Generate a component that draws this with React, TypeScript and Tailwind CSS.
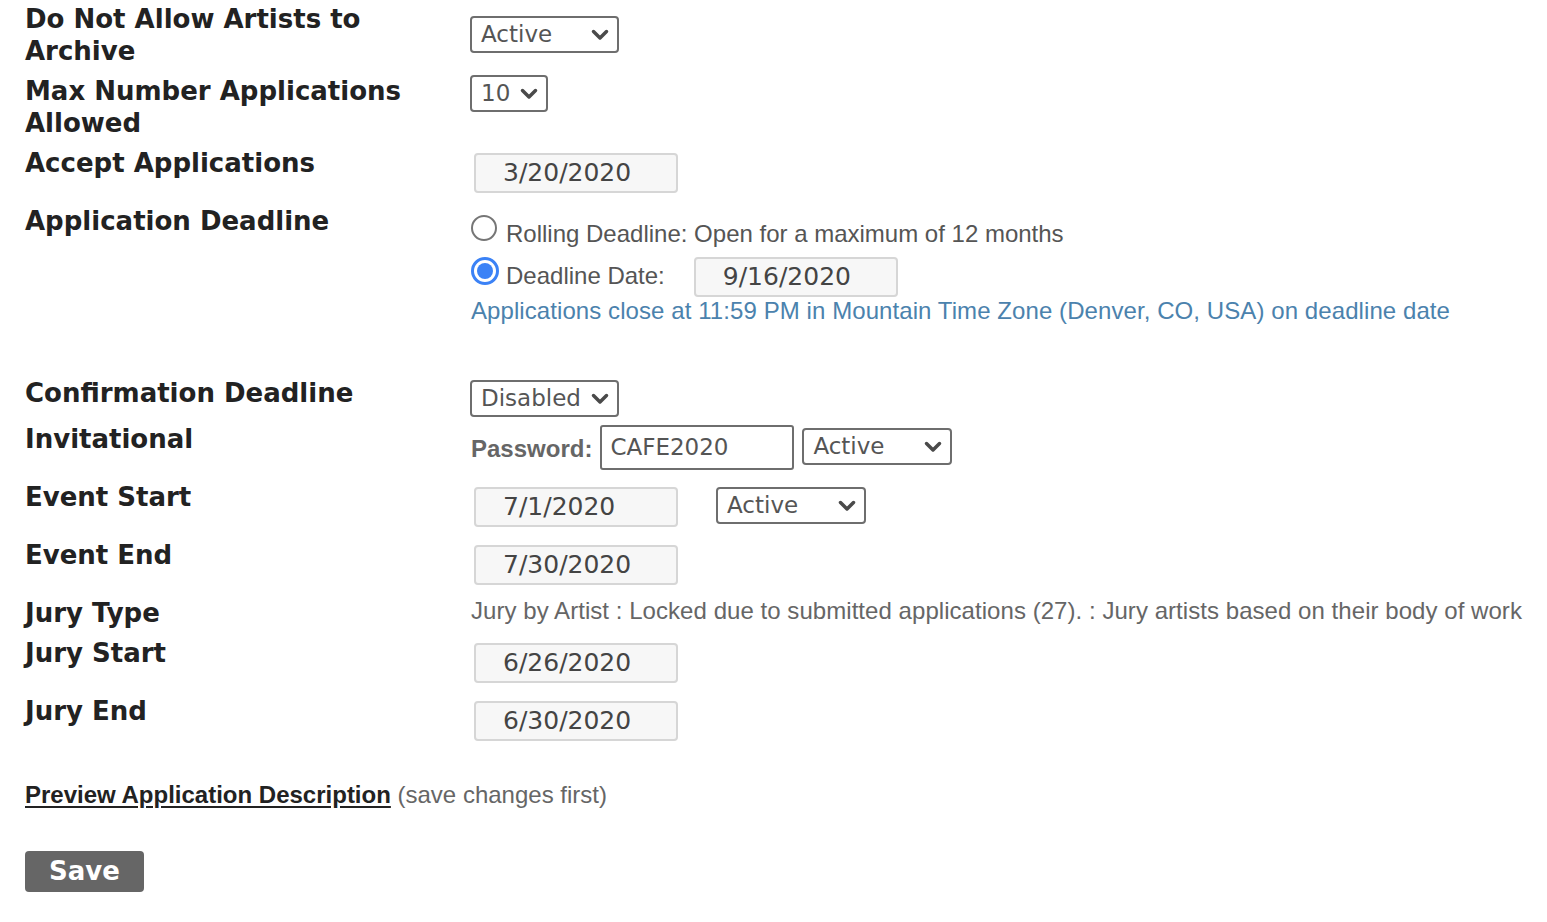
import React from "react";

const Chevron: React.FC = () => (
  <svg width="18" height="12" viewBox="0 0 18 12" className="shrink-0">
    <path d="M2.5 2.5 L9 9 L15.5 2.5" fill="none" stroke="#4a4a4a" strokeWidth="3.5" strokeLinecap="round" strokeLinejoin="round" />
  </svg>
);

const Select: React.FC<{ value: string; className?: string }> = ({ value, className = "" }) => (
  <div
    className={`flex h-[37px] items-center justify-between rounded-[4px] border-2 border-[#6e6e6e] bg-white pl-[9px] pr-[8px] font-['DejaVu_Sans',Verdana,sans-serif] text-[23px] text-[#555] ${className}`}
  >
    <span className="leading-none">{value}</span>
    <Chevron />
  </div>
);

const DateInput: React.FC<{ value: string; className?: string }> = ({ value, className = "" }) => (
  <div
    className={`flex h-[40px] w-[204px] shrink-0 items-center rounded-[4px] border-2 border-[#d6d6d6] bg-[#f7f7f7] pl-[27px] font-['DejaVu_Sans',Verdana,sans-serif] text-[25px] text-[#444] ${className}`}
  >
    {value}
  </div>
);

const Label: React.FC<{ children: React.ReactNode }> = ({ children }) => (
  <div className="w-[446px] shrink-0 font-['DejaVu_Sans',Verdana,sans-serif] text-[26px] font-bold leading-[32px] text-[#222]">
    {children}
  </div>
);

export default function App() {
  return (
    <div className="min-h-[922px] bg-white pl-[25px] pt-[3px] font-['Liberation_Sans',Arial,sans-serif] text-[#555]">
      {/* Archive */}
      <div className="flex h-[72px]">
        <Label>
          Do Not Allow Artists to
          <br />
          Archive
        </Label>
        <Select value="Active" className="mt-[13px] w-[149px] -ml-px" />
      </div>

      {/* Max apps */}
      <div className="flex h-[72px]">
        <Label>
          Max Number Applications
          <br />
          Allowed
        </Label>
        <Select value="10" className="w-[78px] -ml-px" />
      </div>

      {/* Accept */}
      <div className="flex h-[58px]">
        <Label>Accept Applications</Label>
        <DateInput value="3/20/2020" className="mt-[6px] ml-[3px]" />
      </div>

      {/* Deadline */}
      <div className="flex h-[172px]">
        <Label>Application Deadline</Label>
        <div className="flex flex-col">
          <div className="mt-[10px] flex items-start">
            <span className="h-[26px] w-[26px] rounded-full border-2 border-[#767676] bg-white" />
            <span className="ml-[9px] mt-[7px] text-[24px] leading-[24px] text-[#555]">
              Rolling Deadline: Open for a maximum of 12 months
            </span>
          </div>
          <div className="mt-[11px] flex items-start">
            <span className="flex h-[28px] w-[28px] items-center justify-center rounded-full border-[3px] border-[#3b82f6] bg-white">
              <span className="h-[16px] w-[16px] rounded-full bg-[#3b82f6]" />
            </span>
            <span className="ml-[7px] mt-[7px] text-[24px] leading-[24px] text-[#555]">Deadline Date:</span>
            <DateInput value="9/16/2020" className="ml-[29px]" />
          </div>
          <div className="mt-[2px] whitespace-nowrap text-[24px] leading-[24px] tracking-[0.08px] text-[#4b82ad]">
            Applications close at 11:59 PM in Mountain Time Zone (Denver, CO, USA) on deadline date
          </div>
        </div>
      </div>

      {/* Confirmation */}
      <div className="flex h-[46px]">
        <Label>Confirmation Deadline</Label>
        <Select value="Disabled" className="mt-[3px] w-[149px] -ml-px" />
      </div>

      {/* Invitational */}
      <div className="flex h-[58px]">
        <Label>Invitational</Label>
        <div className="mt-[2px] flex items-start">
          <span className="mt-[12px] text-[24px] font-bold leading-none text-[#666]">Password:</span>
          <div className="ml-[8px] flex h-[45px] w-[194px] items-center rounded-[3px] border-2 border-[#6e6e6e] bg-white pl-[8px] font-['DejaVu_Sans',Verdana,sans-serif] text-[23px] text-[#555]">
            CAFE2020
          </div>
          <Select value="Active" className="ml-[8px] mt-[3px] w-[150px]" />
        </div>
      </div>

      {/* Event start */}
      <div className="flex h-[58px]">
        <Label>Event Start</Label>
        <div className="mt-[6px] flex items-start">
          <DateInput value="7/1/2020" className="ml-[3px]" />
          <Select value="Active" className="ml-[38px] w-[150px]" />
        </div>
      </div>

      {/* Event end */}
      <div className="flex h-[58px]">
        <Label>Event End</Label>
        <DateInput value="7/30/2020" className="mt-[6px] ml-[3px]" />
      </div>

      {/* Jury type */}
      <div className="flex h-[40px]">
        <Label>Jury Type</Label>
        <div className="mt-[2px] whitespace-nowrap text-[24px] leading-[24px] tracking-[0.05px] text-[#666]">
          Jury by Artist : Locked due to submitted applications (27). : Jury artists based on their body of work
        </div>
      </div>

      {/* Jury start */}
      <div className="flex h-[58px]">
        <Label>Jury Start</Label>
        <DateInput value="6/26/2020" className="mt-[6px] ml-[3px]" />
      </div>

      {/* Jury end */}
      <div className="flex h-[58px]">
        <Label>Jury End</Label>
        <DateInput value="6/30/2020" className="mt-[6px] ml-[3px]" />
      </div>

      <div className="mt-[27px] text-[24px] leading-[30px]">
        <a href="#" className="font-bold text-[#222] underline underline-offset-[3px]">
          Preview Application Description
        </a>{" "}
        <span className="text-[#666]">(save changes first)</span>
      </div>

      <button className="mt-[41px] flex h-[41px] w-[119px] items-center justify-center rounded-[4px] bg-[#666] font-['DejaVu_Sans',Verdana,sans-serif] text-[26px] font-bold text-white">
        Save
      </button>
    </div>
  );
}
